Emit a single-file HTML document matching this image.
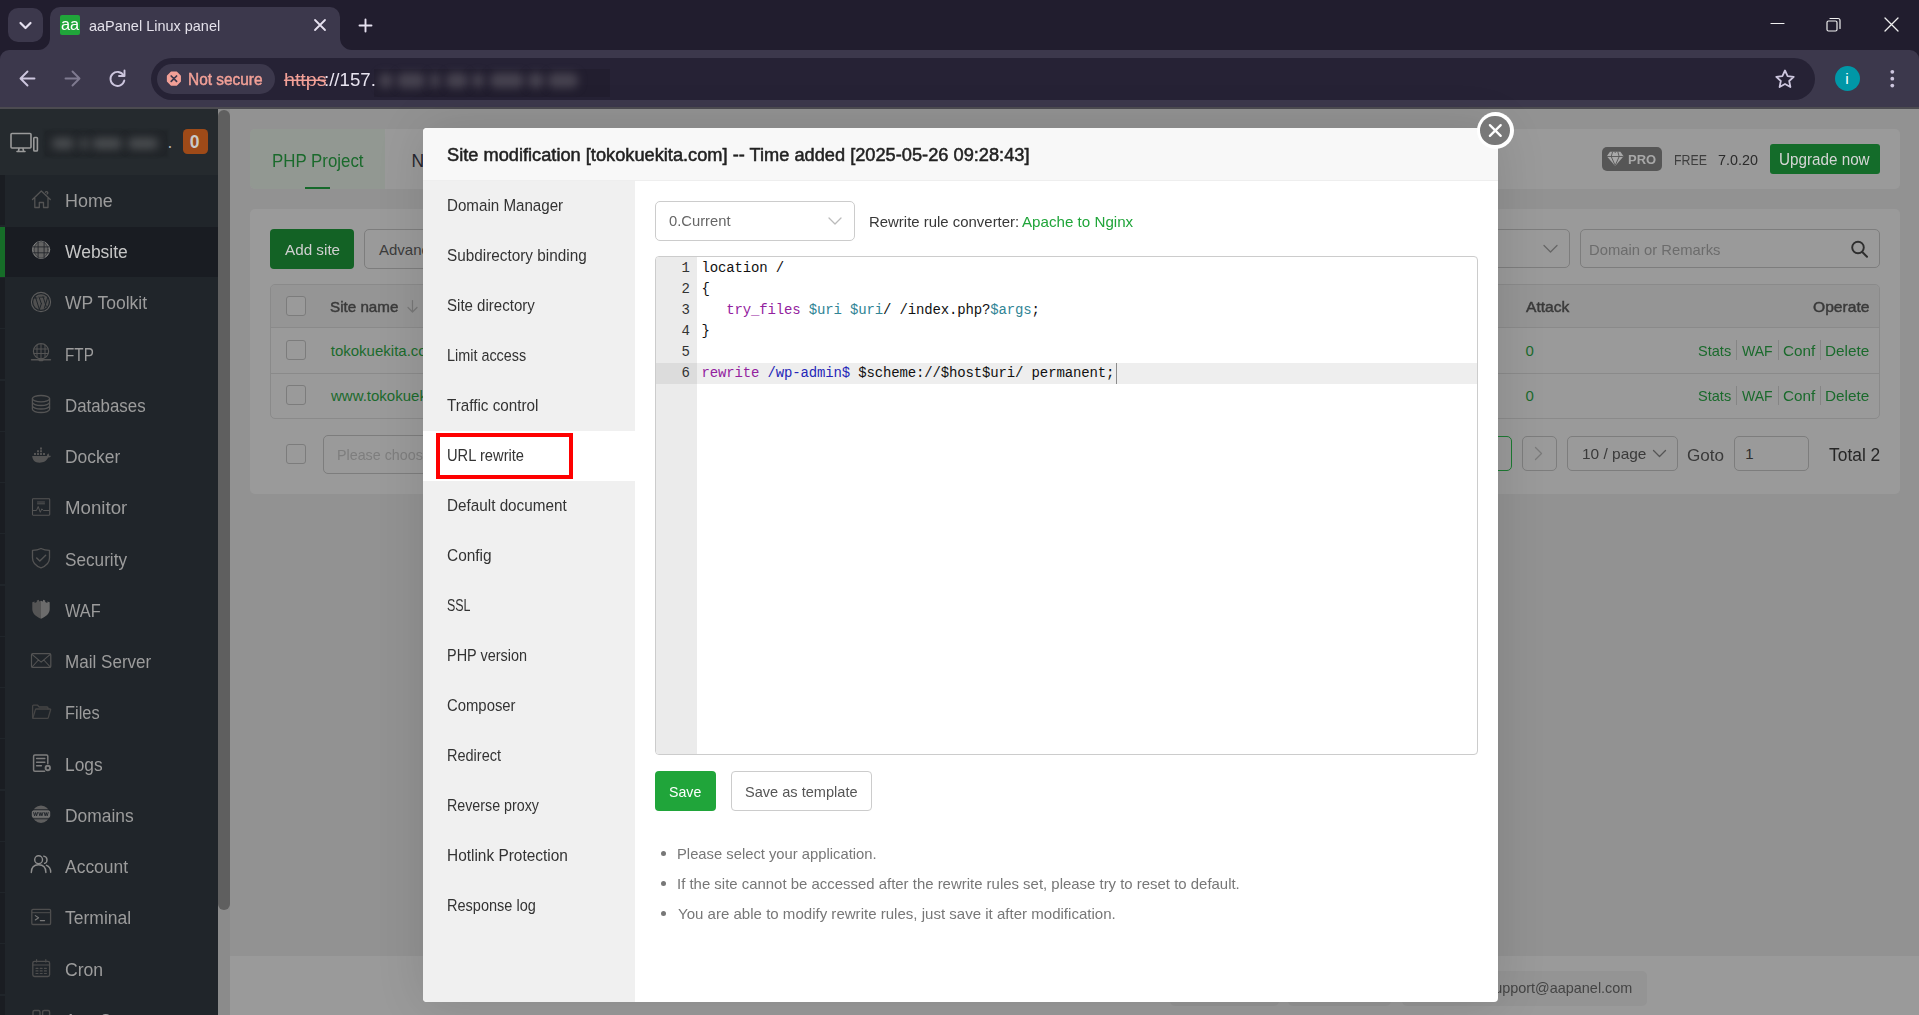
<!DOCTYPE html>
<html lang="en"><head><meta charset="utf-8"><title>aaPanel Linux panel</title>
<style>
*{box-sizing:border-box}
html,body{margin:0;padding:0}
body{width:1919px;height:1015px;overflow:hidden;position:relative;background:#929292;font-family:"Liberation Sans",sans-serif}
.a{position:absolute}
.t{position:absolute;white-space:pre;line-height:1;display:block;transform-origin:0 0}
svg{position:absolute;overflow:visible}
.cb{position:absolute;width:19.5px;height:19.5px;border:1px solid #7c7c7c;border-radius:3px;background:#9a9a9a}
.bx{position:absolute;border:1px solid #7d7d7d;border-radius:5px}
.mi{position:absolute;left:0;width:218px;height:50px;border-left:5px solid #1a1d22}
</style></head><body>
<div class="a" style="left:0px;top:0px;width:1919px;height:62px;background:#211d2e;"></div>
<div class="a" style="left:8px;top:8px;width:35px;height:34px;background:#3c384c;border-radius:10px;"></div>
<div class="a" style="left:0px;top:50px;width:1919px;height:57px;background:#3c384c;border-radius:9px 9px 0 0;"></div>
<div class="a" style="left:0px;top:107px;width:1919px;height:2px;background:#4c4b50;"></div>
<div class="a" style="left:50px;top:7px;width:290px;height:43px;background:#3c384c;border-radius:10px 10px 0 0;"></div>
<svg style="left:38px;top:38px" width="12" height="12"><path d="M12 0 V12 H0 A12 12 0 0 0 12 0Z" fill="#3c384c"/></svg>
<svg style="left:340px;top:38px" width="12" height="12"><path d="M0 0 V12 H12 A12 12 0 0 1 0 0Z" fill="#3c384c"/></svg>
<div class="a" style="left:60px;top:15px;width:20px;height:20px;background:#20a53a;border-radius:2px;"></div>
<div class="a" style="left:151px;top:58px;width:1664px;height:42px;background:#262235;border-radius:21px;"></div>
<div class="a" style="left:157px;top:63.5px;width:118px;height:30.5px;background:#3c384c;border-radius:15.5px;"></div>
<div class="a" style="left:374px;top:69px;width:236px;height:27.5px;background:#221e2f;"></div>
<div class="a" style="left:379px;top:73px;width:14px;height:15px;background:#46424f;filter:blur(4px);border-radius:6px;"></div>
<div class="a" style="left:397px;top:73px;width:28px;height:15px;background:#46424f;filter:blur(4px);border-radius:6px;"></div>
<div class="a" style="left:430px;top:73px;width:10px;height:15px;background:#46424f;filter:blur(4px);border-radius:6px;"></div>
<div class="a" style="left:446px;top:73px;width:22px;height:15px;background:#46424f;filter:blur(4px);border-radius:6px;"></div>
<div class="a" style="left:472px;top:73px;width:12px;height:15px;background:#46424f;filter:blur(4px);border-radius:6px;"></div>
<div class="a" style="left:490px;top:73px;width:34px;height:15px;background:#46424f;filter:blur(4px);border-radius:6px;"></div>
<div class="a" style="left:528px;top:73px;width:16px;height:15px;background:#46424f;filter:blur(4px);border-radius:6px;"></div>
<div class="a" style="left:548px;top:73px;width:30px;height:15px;background:#46424f;filter:blur(4px);border-radius:6px;"></div>
<div class="a" style="left:1834.5px;top:66px;width:25.0px;height:25px;background:#0097a7;border-radius:50%;"></div>
<span class="t" style="left:60.81px;top:17px;font-size:16px;color:#fff;transform:scaleX(1.0224);">aa</span>
<span class="t" style="left:89.39px;top:18px;font-size:15px;color:#e3e0ea;transform:scaleX(0.9649);">aaPanel Linux panel</span>
<span class="t" style="left:188.14px;top:71px;font-size:16.25px;color:#f2a097;transform:scaleX(0.9487);-webkit-text-stroke:0.45px #f2a097;">Not secure</span>
<span class="t" style="left:283.64px;top:72px;font-size:17.5px;color:#f2a097;transform:scaleX(1.1217);">https</span>
<span class="t" style="left:323.80px;top:72px;font-size:17.5px;color:#e8e4f0;transform:scaleX(1.0669);">://157.</span>
<span class="t" style="left:1845.36px;top:71px;font-size:15.5px;color:#fff;">i</span>
<svg style="left:0;top:0" width="1919" height="109" fill="none" stroke-linecap="round" stroke-linejoin="round">
<path d="M20.5 23 L25.5 28 L30.5 23" stroke="#e6e1f0" stroke-width="2.2"/>
<path d="M315 20 L325 30 M325 20 L315 30" stroke="#e6e1f0" stroke-width="1.8"/>
<path d="M359.5 25.5 H371.5 M365.5 19.5 V31.5" stroke="#e6e1f0" stroke-width="1.9"/>
<path d="M34.5 78.5 H21 M27.5 71.5 L20.5 78.5 L27.5 85.5" stroke="#cdc6de" stroke-width="1.9"/>
<path d="M65.5 78.5 H79 M72.5 71.5 L79.5 78.5 L72.5 85.5" stroke="#7f7a90" stroke-width="1.9"/>
<path d="M123.6 75.5 A7 7 0 1 0 124.3 80.5" stroke="#cdc6de" stroke-width="1.9"/>
<path d="M124.5 70.5 V76 H119" stroke="#cdc6de" stroke-width="1.9"/>
<path d="M1771 23.5 H1784" stroke="#f0f0f0" stroke-width="1.2"/>
<rect x="1827" y="21" width="10" height="10" rx="1.5" stroke="#f0f0f0" stroke-width="1.2"/>
<path d="M1830 18.5 H1838 A2 2 0 0 1 1840 20.5 V28.5" stroke="#f0f0f0" stroke-width="1.2"/>
<path d="M1885 18 L1898 31 M1898 18 L1885 31" stroke="#f0f0f0" stroke-width="1.3"/>
<path d="M1785 70.5 l2.6 5.6 l6.1 0.7 l-4.5 4.2 l1.2 6 l-5.4 -3 l-5.4 3 l1.2 -6 l-4.5 -4.2 l6.1 -0.7 Z" stroke="#cdc6de" stroke-width="1.8"/>
<g fill="#cdc6de" stroke="none"><circle cx="1892.3" cy="71.8" r="1.9"/><circle cx="1892.3" cy="78.7" r="1.9"/><circle cx="1892.3" cy="85.6" r="1.9"/></g>
<path d="M166 71 h5.2 l3.7 3.7 v5.2 l-3.7 3.7 h-5.2 l-3.7 -3.7 v-5.2 Z" transform="translate(5.3,1.3)" fill="#f2a097" stroke="#f2a097" stroke-width="1.5"/>
<path d="M171.2 76 L176.6 81.4 M176.6 76 L171.2 81.4" stroke="#3c384c" stroke-width="1.7"/>
<path d="M284.5 80.3 H325.5" stroke="#f2a097" stroke-width="1.5"/>
</svg>
<div class="a" style="left:0px;top:109px;width:218px;height:65.6px;background:#252a2e;"></div>
<div class="a" style="left:0px;top:174.6px;width:218px;height:840.4px;background:#20252a;"></div>
<div class="a" style="left:218px;top:109px;width:12px;height:906px;background:#8b8b8b;"></div>
<div class="a" style="left:218px;top:110px;width:12px;height:800px;background:#5f5f5f;border-radius:6px;"></div>
<div class="a" style="left:218px;top:160px;width:12px;height:700px;background:#5f5f5f;"></div>
<div class="mi" style="top:174.6px;height:50.9px"></div>
<span class="t" style="left:65.00px;top:193px;font-size:17.5px;color:#9c9c9c;transform:scaleX(1.0237);">Home</span>
<div class="mi" style="top:226.75px;background:#191c22;border-left-color:#166d28"></div>
<span class="t" style="left:65.00px;top:244px;font-size:17.5px;color:#c6c6c6;transform:scaleX(0.9979);">Website</span>
<div class="mi" style="top:278.0px;height:50px"></div>
<span class="t" style="left:65.00px;top:295px;font-size:17.5px;color:#9c9c9c;transform:scaleX(1.0012);">WP Toolkit</span>
<div class="mi" style="top:329.25px;height:50px"></div>
<span class="t" style="left:65.00px;top:347px;font-size:17.5px;color:#9c9c9c;transform:scaleX(0.8712);">FTP</span>
<div class="mi" style="top:380.5px;height:50px"></div>
<span class="t" style="left:65.00px;top:398px;font-size:17.5px;color:#9c9c9c;transform:scaleX(0.9634);">Databases</span>
<div class="mi" style="top:431.75px;height:50px"></div>
<span class="t" style="left:65.00px;top:449px;font-size:17.5px;color:#9c9c9c;transform:scaleX(0.9973);">Docker</span>
<div class="mi" style="top:483.0px;height:50px"></div>
<span class="t" style="left:65.00px;top:500px;font-size:17.5px;color:#9c9c9c;transform:scaleX(1.0677);">Monitor</span>
<div class="mi" style="top:534.25px;height:50px"></div>
<span class="t" style="left:65.00px;top:552px;font-size:17.5px;color:#9c9c9c;transform:scaleX(0.9813);">Security</span>
<div class="mi" style="top:585.5px;height:50px"></div>
<span class="t" style="left:65.00px;top:603px;font-size:17.5px;color:#9c9c9c;transform:scaleX(0.9325);">WAF</span>
<div class="mi" style="top:636.75px;height:50px"></div>
<span class="t" style="left:65.00px;top:654px;font-size:17.5px;color:#9c9c9c;transform:scaleX(0.9750);">Mail Server</span>
<div class="mi" style="top:688.0px;height:50px"></div>
<span class="t" style="left:65.00px;top:705px;font-size:17.5px;color:#9c9c9c;transform:scaleX(0.9361);">Files</span>
<div class="mi" style="top:739.25px;height:50px"></div>
<span class="t" style="left:65.00px;top:757px;font-size:17.5px;color:#9c9c9c;transform:scaleX(0.9914);">Logs</span>
<div class="mi" style="top:790.5px;height:50px"></div>
<span class="t" style="left:65.00px;top:808px;font-size:17.5px;color:#9c9c9c;transform:scaleX(0.9937);">Domains</span>
<div class="mi" style="top:841.75px;height:50px"></div>
<span class="t" style="left:65.00px;top:859px;font-size:17.5px;color:#9c9c9c;transform:scaleX(0.9983);">Account</span>
<div class="mi" style="top:893.0px;height:50px"></div>
<span class="t" style="left:65.00px;top:910px;font-size:17.5px;color:#9c9c9c;transform:scaleX(1.0005);">Terminal</span>
<div class="mi" style="top:944.25px;height:50px"></div>
<span class="t" style="left:65.00px;top:962px;font-size:17.5px;color:#9c9c9c;transform:scaleX(1.0054);">Cron</span>
<div class="mi" style="top:995.5px;height:50px"></div>
<span class="t" style="left:65.00px;top:1013px;font-size:17.5px;color:#9c9c9c;transform:scaleX(0.9734);">App Store</span>
<svg style="left:0;top:0" width="230" height="1015" fill="none" stroke="#545454" stroke-width="1.3" stroke-linecap="round" stroke-linejoin="round">
<!-- monitor -->
<g stroke="#9a9a9a" stroke-width="1.6"><rect x="11" y="133.5" width="20" height="14.5" rx="1"/><path d="M17 151.5 H25 M19 148.5 L18.5 151 M23 148.5 L23.5 151"/><rect x="33.8" y="137.5" width="3.6" height="13.5" rx="0.8"/></g>
<!-- home -->
<path d="M32.5 199.5 L41.3 191 L50.3 199.5 M34.8 198 V207.5 H39.3 V202.5 H43.5 V207.5 H48 V198 M45.5 192.3 a1.2 1.2 0 1 1 1.6 1.6"/>
<!-- website (active) -->
<circle cx="41.1" cy="249.8" r="8.6" fill="#636363" stroke="#7e7e7e" stroke-width="1"/>
<g stroke="#191c22" stroke-width="0.9" fill="none" opacity="0.85"><path d="M33 246.9 H49.2 M33 252.8 H49.2 M38.1 241.8 V257.8 M44.1 241.8 V257.8"/><ellipse cx="41.1" cy="249.8" rx="6.9" ry="8.2" stroke-width="0.5"/></g>
<!-- wp -->
<circle cx="41" cy="302" r="9.6" stroke="#5c5c5c" stroke-width="1.1"/>
<circle cx="41" cy="302" r="7.8" fill="#505050" stroke="none"/>
<g stroke="#20252a" stroke-width="1" fill="none" stroke-linecap="butt"><path d="M35.2 296.2 L39.4 309.5 M38.9 296.6 L41.3 303.6 M42.9 296.2 L46.3 306.8 M41.6 303 L39.2 310 M47.6 297.5 L44.3 308.5"/><path d="M33 298 H37.5 M40 297.2 H44.6" stroke-width="0.8"/></g>
<!-- ftp -->
<circle cx="41" cy="351.3" r="7.6" stroke-width="1.2"/><path d="M41 344 V358 M37 345 V357.5 M45 345 V357.5 M34 349 H48 M34 353.5 H48" stroke-width="1"/>
<path d="M31.5 359.7 H50.5" stroke-width="1.4"/><rect x="38.5" y="358.2" width="5" height="3" rx="1.2" fill="#545454" stroke="none"/>
<!-- db -->
<ellipse cx="41" cy="398.7" rx="8.6" ry="3.2"/><path d="M32.4 398.7 V409.3 A8.6 3.2 0 0 0 49.6 409.3 V398.7 M32.4 402.3 A8.6 3.2 0 0 0 49.6 402.3 M32.4 405.8 A8.6 3.2 0 0 0 49.6 405.8"/>
<!-- docker -->
<path d="M32.2 456 H46.8 C47 454.5 47.8 453.6 48.3 453.2 C49 454 49.2 455 49 455.8 C49.8 455.6 50.6 455.7 51 456 C50.4 457.2 49.2 457.6 48.2 457.6 C46.5 461.3 43.5 462.7 39.5 462.7 C35 462.7 32.5 460.2 32.2 456 Z" fill="#545454" stroke="none"/>
<path d="M34 453 H36 V455 H34Z M37 453 H39 V455 H37Z M40 453 H42 V455 H40Z M43 453 H45 V455 H43Z M37 450.3 H39 V452.3 H37Z M40 450.3 H42 V452.3 H40Z M40 447.6 H42 V449.6 H40Z" fill="#545454" stroke="none"/>
<!-- monitor chart -->
<rect x="32.5" y="498.8" width="17.2" height="16.4" rx="0.6" stroke-width="1.1"/><path d="M33 510.5 H36.5 L38.2 506.5 L40.3 512.3 L41.8 508.8 L43.3 510.5 H49.2 M37.5 502 H44.5 M37.5 503.8 H44.5" stroke-width="1"/>
<!-- security -->
<path d="M41 548.5 C43.5 549.8 46.5 550.3 49.5 550.3 V558 C49.5 562.5 46 566 41 567.8 C36 566 32.5 562.5 32.5 558 V550.3 C35.5 550.3 38.5 549.8 41 548.5 Z"/><path d="M36.7 558 L39.8 561 L45.7 555.2" stroke-width="1.4"/>
<!-- waf -->
<path d="M41 618.8 C36.3 616.8 32.3 613.8 32.3 609.3 V602.3 L34.6 601.4 V603 L36.8 602 V600.6 L39 599.8 V601.5 L41 600.8 Z" fill="#555" stroke="none"/>
<path d="M41 618.8 C45.7 616.8 49.7 613.8 49.7 609.3 V602.3 L47.4 601.4 V603 L45.2 602 V600.6 L43 599.8 V601.5 L41 600.8 Z" fill="#6c6c6c" stroke="none"/>
<!-- mail -->
<rect x="31.5" y="653.7" width="19.3" height="13.7" rx="1.2" stroke-width="1.2"/><path d="M32 654.3 L41.1 662.2 L50.3 654.3 M32 667 L38.4 660 M50.3 667 L43.8 660" stroke-width="1.1"/>
<!-- files -->
<g stroke="#454545"><path d="M32.6 717.7 V706.2 Q32.6 705.2 33.6 705.2 H37.6 L39.2 707 H47 Q48 707 48 708 V709"/><path d="M32.8 718.3 L35.4 709.6 Q35.6 709 36.3 709 H50 Q50.8 709 50.6 709.8 L48.3 717.6 Q48.1 718.3 47.4 718.3 Z"/></g>
<!-- logs -->
<g stroke="#7d7d7d" stroke-width="1.5"><path d="M44.6 771.2 H34.8 Q33.6 771.2 33.6 770 V756.2 Q33.6 755 34.8 755 H46.6 Q47.8 755 47.8 756.2 V763.6"/><path d="M36.6 758.6 H44.8 M36.6 762.2 H44.8 M36.6 765.8 H41.4"/><circle cx="47.8" cy="768" r="2.2" stroke-width="1.9"/></g>
<!-- domains -->
<circle cx="41" cy="814.2" r="8.7" fill="#5e5e5e" stroke="none"/><rect x="31.8" y="810.6" width="18.4" height="7" rx="1.5" fill="#6e6e6e" stroke="none"/>
<path d="M33.6 812.5 l1 3.4 l1 -3.4 l1 3.4 l1 -3.4 M38.9 812.5 l1 3.4 l1 -3.4 l1 3.4 l1 -3.4 M44.2 812.5 l1 3.4 l1 -3.4 l1 3.4 l1 -3.4" stroke="#20252a" stroke-width="0.9"/>
<path d="M32.5 809.7 H49.5 M32.5 818.8 H49.5" stroke="#20252a" stroke-width="0.9"/>
<!-- account -->
<g stroke="#8e8e8e" stroke-width="1.4"><circle cx="38.6" cy="859.7" r="3.9"/><path d="M31.3 872.6 C31.3 867.4 34.4 864.8 38.6 864.8 C42.8 864.8 45.9 867.4 45.9 872.6"/><path d="M43.7 856.1 A3.8 3.8 0 0 1 44.6 863.4 M46.4 865.3 C49 866.2 50.7 868.6 50.7 872.2"/></g>
<!-- terminal -->
<g stroke="#4e4e4e"><rect x="31.8" y="909.3" width="18.8" height="15.2" rx="1.2" stroke-width="1.3"/><path d="M32 912.7 H50.4" stroke-width="1"/><path d="M35.3 915.6 L38.6 917.8 L35.3 920 M40.3 920.6 H44.6" stroke="#777" stroke-width="1.1"/></g>
<!-- cron -->
<g stroke="#4e4e4e"><rect x="32.8" y="961.3" width="16.8" height="15.2" rx="1.8" stroke-width="1.3"/><path d="M36.6 959.7 V962 M45.8 959.7 V962 M33 965 H49.4" stroke-width="1.2"/><path d="M36 968.3 H38 M40.2 968.3 H42.2 M44.4 968.3 H46.4 M36 970.9 H38 M40.2 970.9 H42.2 M44.4 970.9 H46.4 M36 973.5 H38 M40.2 973.5 H42.2 M44.4 973.5 H46.4" stroke-width="1.2"/></g>
<!-- app store -->
<g stroke="#4e4e4e" stroke-width="1.4"><rect x="33" y="1010.5" width="7" height="7" rx="1.5"/><rect x="42.6" y="1010.5" width="7" height="7" rx="1.5"/></g>
</svg>
<div class="a" style="left:44px;top:130px;width:124px;height:27px;background:#212529;filter:blur(1px);"></div>
<div class="a" style="left:52px;top:138px;width:22px;height:11px;background:#4a4d50;filter:blur(4px);border-radius:5px;"></div>
<div class="a" style="left:80px;top:138px;width:8px;height:11px;background:#4a4d50;filter:blur(4px);border-radius:5px;"></div>
<div class="a" style="left:92px;top:138px;width:30px;height:11px;background:#4a4d50;filter:blur(4px);border-radius:5px;"></div>
<div class="a" style="left:128px;top:138px;width:30px;height:11px;background:#4a4d50;filter:blur(4px);border-radius:5px;"></div>
<div class="a" style="left:183px;top:129px;width:25px;height:25px;background:#9e4a18;border-radius:4.5px;"></div>
<span class="t" style="left:189.81px;top:134px;font-size:17.5px;color:#c9c9c9;font-weight:700;">0</span>
<span class="t" style="left:167.40px;top:134px;font-size:17.5px;color:#b0b0b0;">.</span>
<div class="a" style="left:250px;top:129px;width:1650px;height:60px;background:#9a9a9a;border-radius:5px;"></div>
<div class="a" style="left:250px;top:129px;width:135px;height:60px;background:#929892;border-radius:5px 0 0 5px;"></div>
<div class="a" style="left:305px;top:186.7px;width:25px;height:2.3px;background:#15692a;"></div>
<span class="t" style="left:271.62px;top:153px;font-size:17.5px;color:#1a6a2c;transform:scaleX(0.9632);">PHP Project</span>
<span class="t" style="left:411.56px;top:153px;font-size:17.5px;color:#26262e;">Node Project</span>
<div class="a" style="left:1602px;top:146.8px;width:59.8px;height:24.0px;background:#565656;border-radius:5px;"></div>
<svg style="left:0;top:0" width="1919" height="200"><path d="M1610 151.8 H1620.4 L1623.6 156.3 L1615.2 165.9 L1606.8 156.3 Z" fill="#a8a8a8"/><path d="M1606.8 156.5 H1623.6 M1612.6 151.8 L1611.2 156.5 L1615.2 165.5 L1619.2 156.5 L1617.8 151.8 M1615.2 151.8 V153" fill="none" stroke="#565656" stroke-width="0.9"/></svg>
<span class="t" style="left:1627.93px;top:154px;font-size:12.5px;color:#a8a8a8;font-weight:700;transform:scaleX(1.0376);">PRO</span>
<span class="t" style="left:1673.99px;top:152px;font-size:15px;color:#3e3e3e;transform:scaleX(0.8233);">FREE</span>
<span class="t" style="left:1718.26px;top:152px;font-size:15px;color:#2b2b2b;transform:scaleX(0.9563);">7.0.20</span>
<div class="a" style="left:1770px;top:144px;width:110px;height:30px;background:#146c2a;border-radius:3px;"></div>
<span class="t" style="left:1779.22px;top:151px;font-size:16.25px;color:#d6d6d6;transform:scaleX(0.9376);">Upgrade now</span>
<div class="a" style="left:250px;top:209px;width:1650px;height:284.5px;background:#9a9a9a;border-radius:5px;"></div>
<div class="a" style="left:270px;top:229px;width:84px;height:40px;background:#136225;border-radius:4px;"></div>
<span class="t" style="left:284.97px;top:242px;font-size:15px;color:#cfcfcf;transform:scaleX(1.0167);">Add site</span>
<div class="bx" style="left:364px;top:229px;width:140px;height:40px"></div>
<span class="t" style="left:378.97px;top:242px;font-size:15px;color:#3c3c3c;">Advanced setup</span>
<div class="bx" style="left:1400px;top:229.3px;width:170px;height:39.2px"></div>
<div class="bx" style="left:1580px;top:229.3px;width:300px;height:39.2px"></div>
<span class="t" style="left:1589.09px;top:242px;font-size:15px;color:#6c6c6c;transform:scaleX(0.9855);">Domain or Remarks</span>
<div class="a" style="left:270px;top:284px;width:1610px;height:134.5px;border:1px solid #8a8a8a;border-radius:5px;overflow:hidden"><div class="a" style="left:0;top:0;width:1610px;height:43px;background:#959595;border-bottom:1px solid #8a8a8a"></div><div class="a" style="left:0;top:87.5px;width:1610px;height:1px;background:#8a8a8a"></div></div>
<div class="cb" style="left:286px;top:296px"></div>
<div class="cb" style="left:286px;top:340px"></div>
<div class="cb" style="left:286px;top:385.3px"></div>
<div class="cb" style="left:286px;top:444px"></div>
<span class="t" style="left:330.31px;top:299px;font-size:15px;color:#3a3a3a;transform:scaleX(1.0121);-webkit-text-stroke:0.45px #3a3a3a;">Site name</span>
<span class="t" style="left:1525.97px;top:299px;font-size:15px;color:#3a3a3a;transform:scaleX(1.0413);-webkit-text-stroke:0.45px #3a3a3a;">Attack</span>
<span class="t" style="left:1813.26px;top:299px;font-size:15px;color:#3a3a3a;transform:scaleX(1.0412);-webkit-text-stroke:0.45px #3a3a3a;">Operate</span>
<span class="t" style="left:1525.41px;top:343px;font-size:15px;color:#1a6a2c;">0</span>
<span class="t" style="left:1698.34px;top:343px;font-size:15px;color:#1a6a2c;transform:scaleX(0.9707);">Stats</span>
<span class="t" style="left:1741.94px;top:343px;font-size:15px;color:#1a6a2c;transform:scaleX(0.9342);">WAF</span>
<span class="t" style="left:1783.02px;top:343px;font-size:15px;color:#1a6a2c;transform:scaleX(1.0178);">Conf</span>
<span class="t" style="left:1825.34px;top:343px;font-size:15px;color:#1a6a2c;transform:scaleX(1.0226);">Delete</span>
<div class="a" style="left:1736px;top:340.3px;width:1px;height:19.5px;background:#858585;"></div>
<div class="a" style="left:1778px;top:340.3px;width:1px;height:19.5px;background:#858585;"></div>
<div class="a" style="left:1820.3px;top:340.3px;width:1.0px;height:19.5px;background:#858585;"></div>
<span class="t" style="left:1525.41px;top:388px;font-size:15px;color:#1a6a2c;">0</span>
<span class="t" style="left:1698.34px;top:388px;font-size:15px;color:#1a6a2c;transform:scaleX(0.9707);">Stats</span>
<span class="t" style="left:1741.94px;top:388px;font-size:15px;color:#1a6a2c;transform:scaleX(0.9342);">WAF</span>
<span class="t" style="left:1783.02px;top:388px;font-size:15px;color:#1a6a2c;transform:scaleX(1.0178);">Conf</span>
<span class="t" style="left:1825.34px;top:388px;font-size:15px;color:#1a6a2c;transform:scaleX(1.0226);">Delete</span>
<div class="a" style="left:1736px;top:385.5px;width:1px;height:19.5px;background:#858585;"></div>
<div class="a" style="left:1778px;top:385.5px;width:1px;height:19.5px;background:#858585;"></div>
<div class="a" style="left:1820.3px;top:385.5px;width:1.0px;height:19.5px;background:#858585;"></div>
<span class="t" style="left:330.77px;top:343px;font-size:15px;color:#1a6a2c;">tokokuekita.com</span>
<span class="t" style="left:331.02px;top:388px;font-size:15px;color:#1a6a2c;">www.tokokuekita.com</span>
<div class="bx" style="left:323px;top:434.5px;width:170px;height:39.5px"></div>
<span class="t" style="left:336.83px;top:447px;font-size:15px;color:#7e7e7e;transform:scaleX(0.9533);">Please choose</span>
<div class="bx" style="left:1476px;top:436px;width:35.7px;height:34.7px;border-color:#1c7a32;border-width:1.3px"></div>
<div class="bx" style="left:1522px;top:436px;width:34.7px;height:34.7px"></div>
<div class="bx" style="left:1567px;top:436px;width:110.6px;height:34.7px"></div>
<div class="bx" style="left:1734px;top:436px;width:74.7px;height:34.7px"></div>
<span class="t" style="left:1581.82px;top:446px;font-size:15px;color:#3a3a3a;transform:scaleX(1.0304);">10 / page</span>
<span class="t" style="left:1687.14px;top:447px;font-size:16.25px;color:#3a3a3a;transform:scaleX(1.0523);">Goto</span>
<span class="t" style="left:1745.36px;top:446px;font-size:15px;color:#2e2e2e;">1</span>
<span class="t" style="left:1829.11px;top:446px;font-size:18.75px;color:#262626;transform:scaleX(0.9279);">Total 2</span>
<svg style="left:0;top:0" width="1919" height="1015" fill="none" stroke-linecap="round" stroke-linejoin="round">
<path d="M1535.5 447.5 L1541.5 453.5 L1535.5 459.5" stroke="#7a7a7a" stroke-width="1.3"/>
<path d="M1653.5 450.5 L1659.5 456.5 L1665.5 450.5" stroke="#555" stroke-width="1.3"/>
<path d="M1544 245.5 L1550.5 252 L1557 245.5" stroke="#666" stroke-width="1.3"/>
<circle cx="1858" cy="247.5" r="5.8" stroke="#2e2e2e" stroke-width="1.9"/><path d="M1862.3 252 L1867 256.8" stroke="#2e2e2e" stroke-width="2"/>
<path d="M412.5 300.5 V312 M408 307.5 L412.5 312 L417 307.5" stroke="#777" stroke-width="1.2"/>
</svg>
<div class="a" style="left:230px;top:956px;width:1689px;height:59px;background:#9a9a9a;"></div>
<div class="a" style="left:1170px;top:971px;width:109px;height:34.7px;background:#949494;border-radius:5px;"></div>
<div class="a" style="left:1288px;top:971px;width:103px;height:34.7px;background:#949494;border-radius:5px;"></div>
<div class="a" style="left:1402px;top:971px;width:244.5px;height:34.7px;background:#949494;border-radius:5px;"></div>
<span class="t" style="left:1486.60px;top:980px;font-size:15px;color:#444;transform:scaleX(0.9616);">support@aapanel.com</span>
<div class="a" style="left:423px;top:128px;width:1075px;height:874px;background:#fff;border-radius:4px;box-shadow:1px 1px 50px rgba(0,0,0,.12);overflow:hidden"><div class="a" style="left:0;top:0;width:1075px;height:53px;background:#f8f8f8;border-bottom:1px solid #eee"></div><div class="a" style="left:0;top:53px;width:212px;height:821px;background:#f0f0f0"></div><div class="a" style="left:0;top:303px;width:212px;height:50px;background:#fff"></div></div>
<span class="t" style="left:446.77px;top:147px;font-size:17.5px;color:#222;transform:scaleX(1.0414);-webkit-text-stroke:0.5px #222;">Site modification [tokokuekita.com] -- Time added [2025-05-26 09:28:43]</span>
<span class="t" style="left:447.10px;top:197px;font-size:16.25px;color:#333;transform:scaleX(0.9318);">Domain Manager</span>
<span class="t" style="left:447.10px;top:247px;font-size:16.25px;color:#333;transform:scaleX(0.9428);">Subdirectory binding</span>
<span class="t" style="left:447.10px;top:297px;font-size:16.25px;color:#333;transform:scaleX(0.9262);">Site directory</span>
<span class="t" style="left:447.10px;top:347px;font-size:16.25px;color:#333;transform:scaleX(0.8861);">Limit access</span>
<span class="t" style="left:447.10px;top:397px;font-size:16.25px;color:#333;transform:scaleX(0.9372);">Traffic control</span>
<span class="t" style="left:447.10px;top:447px;font-size:16.25px;color:#333;transform:scaleX(0.9045);">URL rewrite</span>
<span class="t" style="left:447.10px;top:497px;font-size:16.25px;color:#333;transform:scaleX(0.9398);">Default document</span>
<span class="t" style="left:447.10px;top:547px;font-size:16.25px;color:#333;transform:scaleX(0.9491);">Config</span>
<span class="t" style="left:447.10px;top:597px;font-size:16.25px;color:#333;transform:scaleX(0.7654);">SSL</span>
<span class="t" style="left:447.10px;top:647px;font-size:16.25px;color:#333;transform:scaleX(0.8890);">PHP version</span>
<span class="t" style="left:447.10px;top:697px;font-size:16.25px;color:#333;transform:scaleX(0.9143);">Composer</span>
<span class="t" style="left:447.10px;top:747px;font-size:16.25px;color:#333;transform:scaleX(0.8924);">Redirect</span>
<span class="t" style="left:447.10px;top:797px;font-size:16.25px;color:#333;transform:scaleX(0.8775);">Reverse proxy</span>
<span class="t" style="left:447.10px;top:847px;font-size:16.25px;color:#333;transform:scaleX(0.9493);">Hotlink Protection</span>
<span class="t" style="left:447.10px;top:897px;font-size:16.25px;color:#333;transform:scaleX(0.8940);">Response log</span>
<div class="a" style="left:436px;top:433px;width:137px;height:46px;border:4px solid #fe0000"></div>
<div class="a" style="left:1476.8px;top:111.8px;width:37px;height:37px;border-radius:50%;background:#fff"></div>
<div class="a" style="left:1480.4px;top:115.6px;width:29.6px;height:29.6px;border-radius:50%;background:#787878"></div>
<svg style="left:0;top:0" width="1919" height="1015" fill="none" stroke-linecap="round"><path d="M1489.9 125.1 L1500.7 135.9 M1500.7 125.1 L1489.9 135.9" stroke="#fff" stroke-width="2.3"/></svg>
<div class="a" style="left:655px;top:201px;width:200px;height:39.5px;border:1px solid #ccc;border-radius:5px;background:#fff"></div>
<span class="t" style="left:669.42px;top:213px;font-size:15px;color:#666;transform:scaleX(0.9833);">0.Current</span>
<svg style="left:0;top:0" width="1919" height="1015" fill="none" stroke-linecap="round" stroke-linejoin="round"><path d="M829 218 L835 224 L841 218" stroke="#bbb" stroke-width="1.3"/></svg>
<span class="t" style="left:869.18px;top:214px;font-size:15px;color:#383838;transform:scaleX(0.9953);">Rewrite rule converter:</span>
<span class="t" style="left:1021.97px;top:214px;font-size:15px;color:#20a53a;transform:scaleX(1.0101);">Apache to Nginx</span>
<div class="a" style="left:655px;top:256.4px;width:823px;height:499px;border:1px solid #ccc;border-radius:4px;background:#fff;overflow:hidden"><div class="a" style="left:0;top:0;width:41px;height:499px;background:#ebebeb"></div><div class="a" style="left:0;top:105.2px;width:41px;height:21px;background:#dcdcdc"></div><div class="a" style="left:41px;top:105.2px;width:782px;height:21px;background:#eeeeee"></div></div>
<div class="a" style="left:1115.6px;top:362.6px;width:1.2px;height:21.0px;background:#8c8c8c;"></div>
<span class="t" style="left:681.40px;top:261px;font-size:14px;color:#333;font-family:'Liberation Mono', monospace;letter-spacing:-0.15px;">1</span>
<span class="t" style="left:701.60px;top:261px;font-size:14px;color:#111;font-family:'Liberation Mono', monospace;letter-spacing:-0.15px;">location /</span>
<span class="t" style="left:681.40px;top:282px;font-size:14px;color:#333;font-family:'Liberation Mono', monospace;letter-spacing:-0.15px;">2</span>
<span class="t" style="left:701.60px;top:282px;font-size:14px;color:#111;font-family:'Liberation Mono', monospace;letter-spacing:-0.15px;">{</span>
<span class="t" style="left:681.40px;top:303px;font-size:14px;color:#333;font-family:'Liberation Mono', monospace;letter-spacing:-0.15px;">3</span>
<span class="t" style="left:726.35px;top:303px;font-size:14px;color:#93219e;font-family:'Liberation Mono', monospace;letter-spacing:-0.15px;">try_files</span>
<span class="t" style="left:808.85px;top:303px;font-size:14px;color:#318495;font-family:'Liberation Mono', monospace;letter-spacing:-0.15px;">$uri</span>
<span class="t" style="left:850.10px;top:303px;font-size:14px;color:#318495;font-family:'Liberation Mono', monospace;letter-spacing:-0.15px;">$uri</span>
<span class="t" style="left:883.10px;top:303px;font-size:14px;color:#111;font-family:'Liberation Mono', monospace;letter-spacing:-0.15px;">/ /index.php?</span>
<span class="t" style="left:990.35px;top:303px;font-size:14px;color:#318495;font-family:'Liberation Mono', monospace;letter-spacing:-0.15px;">$args</span>
<span class="t" style="left:1031.60px;top:303px;font-size:14px;color:#111;font-family:'Liberation Mono', monospace;letter-spacing:-0.15px;">;</span>
<span class="t" style="left:681.40px;top:324px;font-size:14px;color:#333;font-family:'Liberation Mono', monospace;letter-spacing:-0.15px;">4</span>
<span class="t" style="left:701.60px;top:324px;font-size:14px;color:#111;font-family:'Liberation Mono', monospace;letter-spacing:-0.15px;">}</span>
<span class="t" style="left:681.40px;top:345px;font-size:14px;color:#333;font-family:'Liberation Mono', monospace;letter-spacing:-0.15px;">5</span>
<span class="t" style="left:681.40px;top:366px;font-size:14px;color:#333;font-family:'Liberation Mono', monospace;letter-spacing:-0.15px;">6</span>
<span class="t" style="left:701.60px;top:366px;font-size:14px;color:#93219e;font-family:'Liberation Mono', monospace;letter-spacing:-0.15px;">rewrite</span>
<span class="t" style="left:767.60px;top:366px;font-size:14px;color:#2626b8;font-family:'Liberation Mono', monospace;letter-spacing:-0.15px;">/wp-admin$</span>
<span class="t" style="left:858.35px;top:366px;font-size:14px;color:#111;font-family:'Liberation Mono', monospace;letter-spacing:-0.15px;">$scheme://$host$uri/ permanent;</span>
<div class="a" style="left:655px;top:771px;width:61px;height:40px;background:#20a53a;border-radius:4px;"></div>
<span class="t" style="left:669.36px;top:784px;font-size:15px;color:#fff;transform:scaleX(0.9435);">Save</span>
<div class="a" style="left:731px;top:771px;width:141px;height:40px;border:1px solid #ccc;border-radius:4px;background:#fff"></div>
<span class="t" style="left:745.34px;top:784px;font-size:15px;color:#555;transform:scaleX(0.9716);">Save as template</span>
<div class="a" style="left:661px;top:851.3px;width:5px;height:5.0px;background:#777;border-radius:50%;"></div>
<span class="t" style="left:676.79px;top:846px;font-size:15px;color:#777;transform:scaleX(0.9849);">Please select your application.</span>
<div class="a" style="left:661px;top:881.3px;width:5px;height:5.0px;background:#777;border-radius:50%;"></div>
<span class="t" style="left:676.62px;top:876px;font-size:15px;color:#777;transform:scaleX(0.9955);">If the site cannot be accessed after the rewrite rules set, please try to reset to default.</span>
<div class="a" style="left:661px;top:911.3px;width:5px;height:5.0px;background:#777;border-radius:50%;"></div>
<span class="t" style="left:677.67px;top:906px;font-size:15px;color:#777;transform:scaleX(1.0032);">You are able to modify rewrite rules, just save it after modification.</span>

</body></html>
